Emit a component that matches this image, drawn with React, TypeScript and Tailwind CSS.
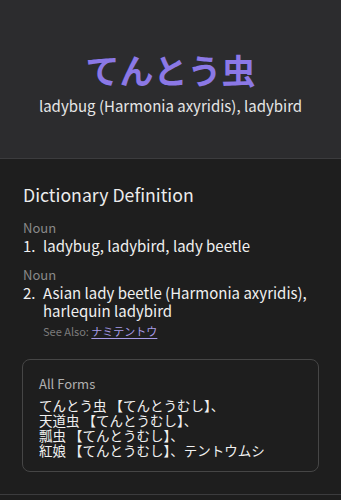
import React from "react";

export default function App() {
  const font = { fontFamily: '"Noto Sans CJK JP", "Noto Sans", sans-serif' };
  return (
    <div className="w-[341px] h-[500px] bg-[#1e1e1e] overflow-hidden" style={font}>
      <div className="h-[159px] bg-[#2c2c2e] border-b border-[#3c3c3e] flex flex-col items-center pt-[50px]">
        <div className="text-[34px] leading-[40px] font-bold text-[#8b78e6]">てんとう虫</div>
        <div className="text-[15px] leading-[22px] text-[#e6e6e6] mt-[5px]">ladybug (Harmonia axyridis), ladybird</div>
      </div>
      <div className="px-[23px] pt-[23px]">
        <div className="text-[17.7px] leading-[24px] text-[#ececec]">Dictionary Definition</div>
        <div className="mt-[13px] text-[13px] leading-[18px] text-[#8a8a8a]">Noun</div>
        <div className="flex text-[15px] leading-[18px] text-[#f0f0f0]">
          <span className="w-[20px] shrink-0">1.</span>
          <span>ladybug, ladybird, lady beetle</span>
        </div>
        <div className="mt-[11px] text-[13px] leading-[18px] text-[#8a8a8a]">Noun</div>
        <div className="flex text-[15px] leading-[18px] text-[#f0f0f0]">
          <span className="w-[20px] shrink-0">2.</span>
          <div>
            <div className="whitespace-nowrap">Asian lady beetle (Harmonia axyridis),</div>
            <div>harlequin ladybird</div>
            <div className="mt-[3px] text-[11px] leading-[16px] text-[#7c7c7c]">
              See Also: <span className="text-[#a79be6] underline underline-offset-2">ナミテントウ</span>
            </div>
          </div>
        </div>
        <div className="mt-[20px] mx-[-1px] rounded-[8px] border border-[#464646] px-[16px] pt-[15px] pb-[13px]">
          <div className="text-[13px] leading-[18px] text-[#b0b0b0]">All Forms</div>
          <div className="mt-[5px] text-[13.5px] leading-[15px] text-[#f0f0f0]">
            <div>てんとう虫 【てんとうむし】、</div>
            <div>天道虫 【てんとうむし】、</div>
            <div>瓢虫 【てんとうむし】、</div>
            <div>紅娘 【てんとうむし】、テントウムシ</div>
          </div>
        </div>
      </div>
      <div className="mt-[22px] border-t border-[#3c3c3e]" />
    </div>
  );
}
